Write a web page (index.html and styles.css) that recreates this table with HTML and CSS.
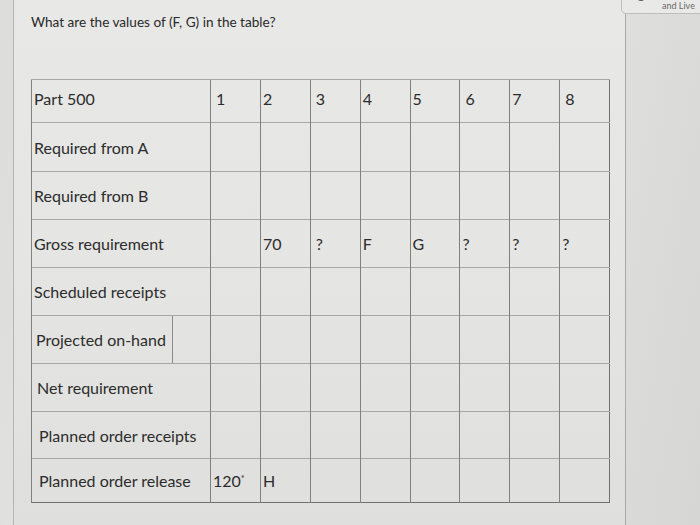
FILE: index.html
```html
<!DOCTYPE html>
<html>
<head>
<meta charset="utf-8">
<link rel="stylesheet" href="styles.css">
</head>
<body>
<div class="page">
  <div class="gutter"></div>
  <main class="panel">
    <p class="question">What are the values of (F, G) in the table?</p>
    <table class="mrp">
      <colgroup>
        <col class="c-label"><col class="c-num"><col class="c-num"><col class="c-num"><col class="c-num"><col class="c-num"><col class="c-num"><col class="c-num"><col class="c-num">
      </colgroup>
      <tr class="r-head"><td>Part 500</td><td class="pad">1</td><td>2</td><td class="pad">3</td><td>4</td><td>5</td><td class="pad">6</td><td>7</td><td class="pad">8</td></tr>
      <tr class="r2"><td>Required from A</td><td></td><td></td><td></td><td></td><td></td><td></td><td></td><td></td></tr>
      <tr class="r3"><td>Required from B</td><td></td><td></td><td></td><td></td><td></td><td></td><td></td><td></td></tr>
      <tr class="r4"><td>Gross requirement</td><td></td><td>70</td><td class="pad">?</td><td>F</td><td>G</td><td>?</td><td>?</td><td>?</td></tr>
      <tr class="r5"><td>Scheduled receipts</td><td></td><td></td><td></td><td></td><td></td><td></td><td></td><td></td></tr>
      <tr class="r6"><td class="boxed"><span class="inner">Projected on-hand</span></td><td></td><td></td><td></td><td></td><td></td><td></td><td></td><td></td></tr>
      <tr class="r7"><td class="ind">Net requirement</td><td></td><td></td><td></td><td></td><td></td><td></td><td></td><td></td></tr>
      <tr class="r8"><td class="ind2">Planned order receipts</td><td></td><td></td><td></td><td></td><td></td><td></td><td></td><td></td></tr>
      <tr class="r9"><td class="ind2">Planned order release</td><td>120<sup>*</sup></td><td>H</td><td></td><td></td><td></td><td></td><td></td><td></td></tr>
    </table>
  </main>
  <aside class="side">
    <div class="live-btn"><span class="dot"></span><span class="live-text">and Live</span></div>
  </aside>
</div>
</body>
</html>
```
FILE: styles.css
```css
html, body {
  margin: 0;
  padding: 0;
}
body {
  width: 700px;
  height: 525px;
  overflow: hidden;
  background: linear-gradient(100deg, #dcdcda 0%, #e6e6e4 30%, #e2e2e0 70%, #d6d6d4 100%);
  font-family: Lato, "Liberation Sans", sans-serif;
  color: #2b2b2b;
}
.page {
  display: flex;
  height: 525px;
}
.gutter {
  width: 13px;
  flex: none;
}
.panel {
  width: 613px;
  flex: none;
  border-left: 1px solid #b4b4b2;
  border-right: 1px solid #a9a9a7;
  padding: 0 0 0 17px;
  box-sizing: border-box;
  background: linear-gradient(180deg, #e8e8e6 0%, #e5e5e3 50%, #dfdfdd 100%);
}
.question {
  margin: 14px 0 0 0;
  font-size: 13.6px;
  line-height: 17px;
  color: #2a2a2a;
}
.mrp {
  margin-top: 48px;
  border-collapse: collapse;
  table-layout: fixed;
  width: 578px;
  border: 1.5px solid #707070;
}
.c-label { width: 179px; }
.c-num { width: 49.9px; }
.mrp td {
  border-left: 1px solid #808080;
  border-top: 1px solid #a8a8a6;
  padding: 0 0 0 2px;
  font-size: 16px;
  vertical-align: middle;
  white-space: nowrap;
  color: #2c2c2c;
}
.mrp td:first-child {
  padding-left: 2px;
}
.mrp td.pad { padding-left: 5px; }
.mrp td.ind { padding-left: 5px; }
.mrp td.ind2 { padding-left: 7px; }
.mrp td.boxed { padding: 0 0 0 4px; height: 47px; }
.inner {
  display: flex;
  align-items: center;
  height: 47px;
  width: 136px;
  border-right: 1px solid #8a8a8a;
}
.mrp sup {
  font-size: 9px;
  vertical-align: 5px;
}
.r-head td { height: 36px; padding-bottom: 6px; }
.r2 td { height: 48px; }
.r3 td { height: 47px; }
.r4 td { height: 47px; }
.r5 td { height: 47px; }
.r6 td { height: 47px; }
.r7 td { height: 47px; }
.r8 td { height: 46px; }
.r9 td { height: 43px; }
.side {
  flex: 1;
  position: relative;
}
.live-btn {
  position: absolute;
  left: -5px;
  top: -6px;
  width: 90px;
  height: 20px;
  box-sizing: border-box;
  border: 1px solid #bdbdbb;
  border-radius: 5px;
  background: #e9e9e7;
  display: flex;
  align-items: flex-end;
  padding: 0 0 2px 14px;
  gap: 16px;
}
.dot {
  width: 10px;
  height: 10px;
  border-radius: 50%;
  background: #5a5a5a;
  margin-top: -4px;
  align-self: flex-start;
}
.live-text {
  font-size: 9px;
  color: #6a6a6a;
  line-height: 10px;
}
```
